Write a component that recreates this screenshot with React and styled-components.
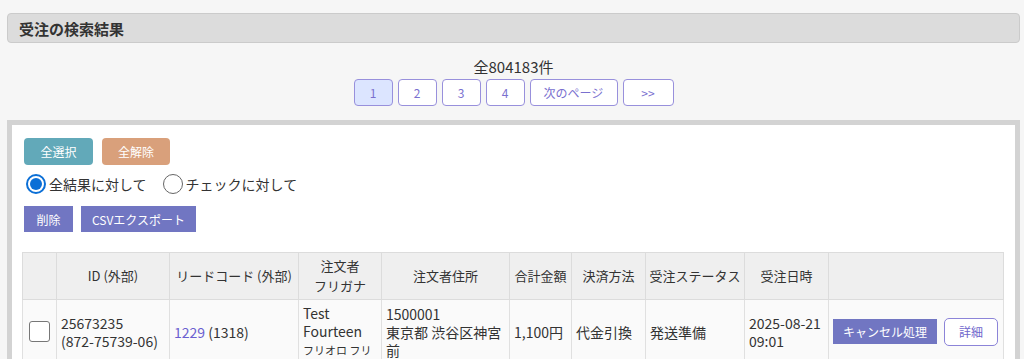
import React from "react";
import styled, { createGlobalStyle } from "styled-components";

const GlobalStyle = createGlobalStyle`
  body {
    margin: 0;
    background: #f6f6f6;
    font-family: "Noto Sans CJK JP", "Noto Sans", sans-serif;
    color: #333;
  }
`;

const Page = styled.div`
  padding: 13px 4px 0 7px;
`;

const TitleBar = styled.div`
  height: 28px;
  background: #dcdcdc;
  border: 1px solid #cbcbcb;
  border-radius: 4px;
  display: flex;
  align-items: center;
  padding-left: 11px;
  font-size: 15px;
  font-weight: bold;
  color: #333;
`;

const Count = styled.div`
  margin-top: 14px;
  text-align: center;
  font-size: 15px;
  line-height: 20px;
`;

const Pager = styled.div`
  margin-top: 2px;
  display: flex;
  justify-content: center;
  gap: 5px;
`;

const PageButton = styled.button`
  box-sizing: border-box;
  height: 27px;
  min-width: ${(p) => p.w || 39}px;
  padding: 0;
  border: 1px solid #9890dc;
  border-radius: 4px;
  background: ${(p) => (p.active ? "#dce5ff" : "#fff")};
  color: #7a70cf;
  font-family: inherit;
  font-size: 12px;
`;

const Panel = styled.div`
  margin-top: 14px;
  border: 5px solid #d3d3d3;
  border-bottom: none;
  background: #fff;
  padding: 13px 12px 0 11px;
`;

const Row = styled.div`
  display: flex;
  align-items: center;
  gap: ${(p) => p.gap || 8}px;
  margin-top: ${(p) => p.mt || 0}px;
  margin-left: ${(p) => p.ml || 0}px;
`;

const FillButton = styled.button`
  box-sizing: border-box;
  height: ${(p) => p.h || 27}px;
  width: ${(p) => (p.w ? `${p.w}px` : "auto")};
  padding: 0;
  border: none;
  border-radius: ${(p) => p.r ?? 3}px;
  background: ${(p) => p.bg};
  color: #fff;
  font-family: inherit;
  font-size: ${(p) => p.fs || 12}px;
  white-space: nowrap;
`;

const RadioLabel = styled.label`
  display: flex;
  align-items: center;
  gap: 3px;
  font-size: 14px;
  color: #333;
  margin-right: 8px;
`;

const RadioMark = styled.span`
  box-sizing: border-box;
  width: 20px;
  height: 20px;
  border-radius: 50%;
  border: ${(p) => (p.on ? "2px solid #0b6fd6" : "1.5px solid #666")};
  display: flex;
  align-items: center;
  justify-content: center;
  &::after {
    content: "";
    width: 12px;
    height: 12px;
    border-radius: 50%;
    background: ${(p) => (p.on ? "#0b6fd6" : "transparent")};
  }
`;

const Table = styled.table`
  margin-top: 20px;
  margin-left: -1px;
  width: 981px;
  table-layout: fixed;
  border-collapse: collapse;
  font-size: 13px;
  line-height: 20px;
`;

const Th = styled.th`
  background: #efefef;
  border: 1px solid #dcdcdc;
  font-weight: normal;
  padding: 3px 2px;
  height: 40px;
  color: #333;
  text-align: center;
  white-space: nowrap;
`;

const Td = styled.td`
  background: #fafafa;
  border: 1px solid #e0e0e0;
  padding: 4px 4px;
  vertical-align: middle;
  color: #333;
  font-size: 14px;
  line-height: 18px;
  overflow: hidden;
  white-space: nowrap;
  text-align: ${(p) => p.align || "left"};
`;

const Check = styled.span`
  display: block;
  box-sizing: border-box;
  margin: 0 auto;
  width: 21px;
  height: 21px;
  border: 1px solid #777;
  border-radius: 3px;
  background: #fff;
`;

const Link = styled.a`
  color: #6a5fd0;
  text-decoration: none;
`;

const Small = styled.span`
  font-size: 11px;
`;

const OutlineButton = styled.button`
  box-sizing: border-box;
  height: 28px;
  width: 54px;
  border: 1px solid #8c84d8;
  border-radius: 5px;
  background: #fff;
  color: #6f66cc;
  font-family: inherit;
  font-size: 12px;
`;

const cols = [34, 113, 129, 83, 128, 62, 74, 99, 84, 175];

export default function App() {
  return (
    <Page>
      <GlobalStyle />
      <TitleBar>受注の検索結果</TitleBar>
      <Count>全804183件</Count>
      <Pager>
        <PageButton active>1</PageButton>
        <PageButton>2</PageButton>
        <PageButton>3</PageButton>
        <PageButton>4</PageButton>
        <PageButton w={88}>次のページ</PageButton>
        <PageButton w={51}>&gt;&gt;</PageButton>
      </Pager>
      <Panel>
        <Row gap={9} ml={1}>
          <FillButton bg="#62a9b9" r={4} w={69}>全選択</FillButton>
          <FillButton bg="#d9a07b" r={4} w={68}>全解除</FillButton>
        </Row>
        <Row mt={9} gap={0} ml={3}>
          <RadioLabel>
            <RadioMark on />
            全結果に対して
          </RadioLabel>
          <RadioLabel>
            <RadioMark />
            チェックに対して
          </RadioLabel>
        </Row>
        <Row mt={12} gap={8} ml={1}>
          <FillButton bg="#7176c2" h={26} r={0} w={49}>削除</FillButton>
          <FillButton bg="#7176c2" h={26} r={0} w={115}>CSVエクスポート</FillButton>
        </Row>
        <Table>
          <colgroup>
            {cols.map((w, i) => (
              <col key={i} style={{ width: w }} />
            ))}
          </colgroup>
          <thead>
            <tr>
              <Th />
              <Th>ID (外部)</Th>
              <Th>リードコード (外部)</Th>
              <Th>注文者<br />フリガナ</Th>
              <Th>注文者住所</Th>
              <Th>合計金額</Th>
              <Th>決済方法</Th>
              <Th>受注ステータス</Th>
              <Th>受注日時</Th>
              <Th />
            </tr>
          </thead>
          <tbody>
            <tr>
              <Td align="center"><Check /></Td>
              <Td>25673235<br />(872-75739-06)</Td>
              <Td><Link>1229</Link> (1318)</Td>
              <Td>Test<br />Fourteen<br /><Small>フリオロ フリ</Small></Td>
              <Td>1500001<br />東京都 渋谷区神宮<br />前</Td>
              <Td>1,100円</Td>
              <Td>代金引換</Td>
              <Td>発送準備</Td>
              <Td>2025-08-21<br />09:01</Td>
              <Td>
                <Row gap={7}>
                  <FillButton bg="#7176c2" h={25} r={0} w={104} fs={12}>キャンセル処理</FillButton>
                  <OutlineButton>詳細</OutlineButton>
                </Row>
              </Td>
            </tr>
          </tbody>
        </Table>
      </Panel>
    </Page>
  );
}
